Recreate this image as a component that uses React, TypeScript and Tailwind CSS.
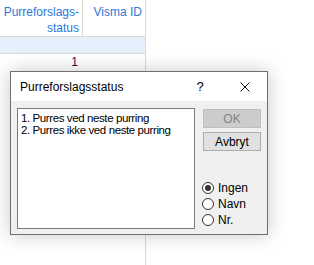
import React from 'react';

const font = { fontFamily: '"Liberation Sans", Arial, sans-serif' };

function Radio({ label, checked = false }: { label: string; checked?: boolean }) {
  return (
    <div className="flex items-center h-[16px]">
      <span className="w-[12px] h-[12px] rounded-full border border-[#333333] bg-white flex items-center justify-center">
        {checked && <span className="w-[6px] h-[6px] rounded-full bg-[#333333]" />}
      </span>
      <span className="ml-[4px] text-[12px] text-black leading-none">{label}</span>
    </div>
  );
}

export default function App() {
  return (
    <div className="relative w-[314px] h-[265px] bg-white overflow-hidden" style={font}>
      {/* grid behind the dialog */}
      <div className="w-[146px] h-full border-r border-[#d9d9d9]">
        <div className="flex h-[37px] border-b border-[#d9d9d9] text-[12px] text-[#2b78d6] leading-[16px]">
          <div className="w-[83px] border-r border-[#d9d9d9] pt-[4px] pr-[3px] text-right">
            Purreforslags-
            <br />
            status
          </div>
          <div className="flex-1 pt-[4px] pr-[3px] text-right">Visma ID</div>
        </div>
        <div className="h-[17px] bg-[#e5f0fc] border-b border-[#d9d9d9]" />
        <div className="flex h-[17px] text-[12px] text-[#3a0a4a] leading-[17px]">
          <div className="w-[83px] pr-[5px] text-right">1</div>
        </div>
      </div>

      {/* dialog */}
      <div className="absolute left-[10px] top-[71px] w-[258px] h-[164px] border border-[#6f6f6f] bg-[#f0f0f0] shadow-[0_0_18px_rgba(0,0,0,0.22)] flex flex-col">
        <div className="h-[29px] bg-white flex items-center pl-[9px] text-[12px] text-black">
          <span className="flex-1">Purreforslagsstatus</span>
          <span className="w-[20px] text-center text-[13px] mr-[30px]">?</span>
          <svg width="10" height="10" viewBox="0 0 10 10" className="mr-[17px]">
            <path d="M0.5 0.5 L9.5 9.5 M9.5 0.5 L0.5 9.5" stroke="#111" strokeWidth="1" fill="none" />
          </svg>
        </div>
        <div className="flex-1 flex pl-[6px] pr-[6px] pt-[7px] pb-[5px]">
          <div className="w-[178px] h-full bg-white border border-[#7a7a7a] pt-[3px] pl-[3px] text-[11.5px] tracking-[-0.4px] leading-[12px] text-black">
            <div>1. Purres ved neste purring</div>
            <div>2. Purres ikke ved neste purring</div>
          </div>
          <div className="flex-1 flex flex-col ml-[8px] pt-[1px]">
            <div className="h-[19px] bg-[#cccccc] border border-[#bfbfbf] flex items-center justify-center text-[12px] text-[#838383]">
              OK
            </div>
            <div className="h-[19px] mt-[4px] bg-[#e1e1e1] border border-[#adadad] flex items-center justify-center text-[12px] text-black">
              Avbryt
            </div>
            <div className="mt-[29px] -ml-[1px] flex flex-col">
              <Radio label="Ingen" checked />
              <Radio label="Navn" />
              <Radio label="Nr." />
            </div>
          </div>
        </div>
      </div>
    </div>
  );
}
